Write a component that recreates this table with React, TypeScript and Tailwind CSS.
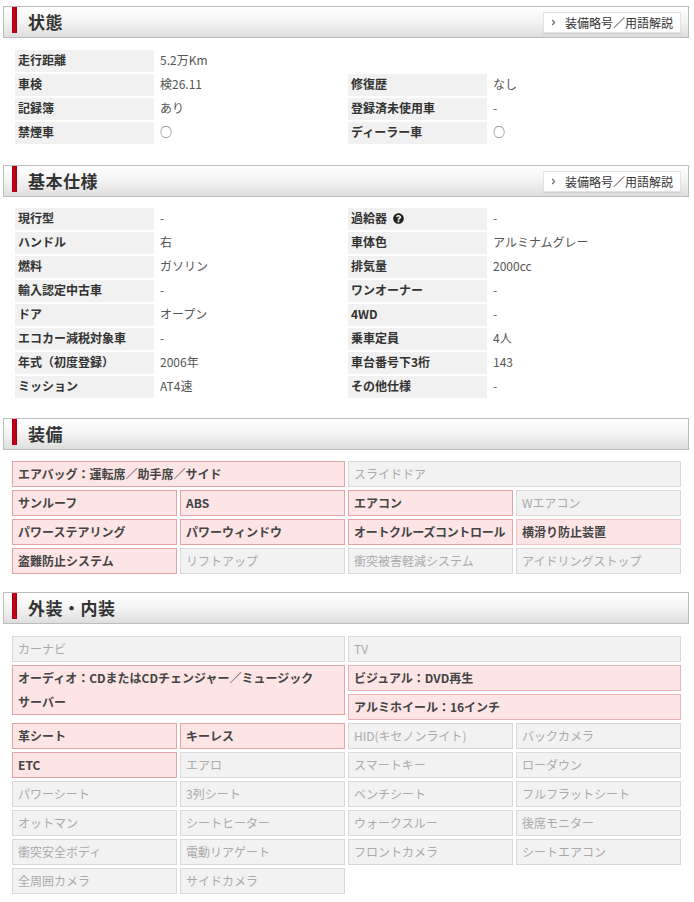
import React from "react";
import { FaQuestionCircle } from "react-icons/fa";

const FONT = {
  fontFamily:
    '"Noto Sans CJK JP", "Noto Sans", "Liberation Sans", sans-serif',
};

function Header({ title, button }: { title: string; button?: boolean }) {
  return (
    <div className="ml-[3px] w-[686px] h-[32px] border border-[#bdbdbd] bg-gradient-to-b from-[#ffffff] via-[#f3f3f3] to-[#dedede] flex items-start">
      <div className="ml-[8px] w-[5px] h-[26px] bg-gradient-to-r from-[#9c0010] via-[#d0001a] to-[#9c0010]" />
      <div className="ml-[11px] h-[30px] flex items-center text-[17px] font-bold text-[#333] tracking-[0.5px]">
        {title}
      </div>
      {button && (
        <div className="ml-auto mr-[7px] mt-[5px] h-[21px] w-[138px] bg-white border border-[#e2e2e2] shadow-[0_1px_1px_rgba(0,0,0,0.08)] flex items-center">
          <svg width="5" height="7" viewBox="0 0 5 7" className="ml-[7px]">
            <path d="M1.2 1 L3.6 3.5 L1.2 6" fill="none" stroke="#666" strokeWidth="1.1" />
          </svg>
          <span className="ml-[9px] text-[12px] text-[#333]">装備略号／用語解説</span>
        </div>
      )}
    </div>
  );
}

type Pair = { label?: React.ReactNode; value?: string };

function Half({ p, right }: { p: Pair; right?: boolean }) {
  if (!p.label) return <div className={right ? "flex-1" : "w-[333px]"} />;
  return (
    <div className={`flex h-[22px] ${right ? "flex-1" : "w-[333px]"}`}>
      <div className="w-[139px] bg-[#f1f1f1] pl-[3px] pb-[2px] flex items-center text-[12px] font-bold text-[#333]">
        {p.label}
      </div>
      <div className="flex-1 flex items-center pb-[2px] pl-[6px] text-[12px] text-[#555]">
        {p.value}
      </div>
    </div>
  );
}

function SpecTable({ rows }: { rows: [Pair, Pair][] }) {
  return (
    <div className="ml-[15px] w-[666px] flex flex-col gap-[2px]">
      {rows.map((r, i) => (
        <div key={i} className="flex">
          <Half p={r[0]} />
          <Half p={r[1]} right />
        </div>
      ))}
    </div>
  );
}

type Item = { t: React.ReactNode; on: boolean; span?: 2; cls?: string };

function Cell({ it }: { it: Item }) {
  const base = "h-[26px] border px-[5px] text-[12px] leading-[24px] whitespace-nowrap overflow-hidden";
  const color = it.on
    ? "bg-[#fde5e6] border-[#e4a4a7] text-[#444] font-bold"
    : "bg-[#f2f2f2] border-[#d9d9d9] text-[#aaa]";
  return <div className={`${base} ${color} ${it.span === 2 ? "col-span-2" : ""} ${it.cls ?? ""}`}>{it.t}</div>;
}

function Grid({ items }: { items: Item[] }) {
  return (
    <div className="ml-[12px] w-[669px] grid grid-cols-4 gap-[3px]">
      {items.map((it, i) => (
        <Cell key={i} it={it} />
      ))}
    </div>
  );
}

export default function App() {
  const status: [Pair, Pair][] = [
    [{ label: "走行距離", value: "5.2万Km" }, {}],
    [{ label: "車検", value: "検26.11" }, { label: "修復歴", value: "なし" }],
    [{ label: "記録簿", value: "あり" }, { label: "登録済未使用車", value: "-" }],
    [{ label: "禁煙車", value: "○" }, { label: "ディーラー車", value: "○" }],
  ];
  const spec: [Pair, Pair][] = [
    [
      { label: "現行型", value: "-" },
      {
        label: (
          <span className="flex items-center">
            過給器
            <FaQuestionCircle className="ml-[6px] text-[#222]" size={11} />
          </span>
        ),
        value: "-",
      },
    ],
    [{ label: "ハンドル", value: "右" }, { label: "車体色", value: "アルミナムグレー" }],
    [{ label: "燃料", value: "ガソリン" }, { label: "排気量", value: "2000cc" }],
    [{ label: "輸入認定中古車", value: "-" }, { label: "ワンオーナー", value: "-" }],
    [{ label: "ドア", value: "オープン" }, { label: "4WD", value: "-" }],
    [{ label: "エコカー減税対象車", value: "-" }, { label: "乗車定員", value: "4人" }],
    [{ label: "年式（初度登録）", value: "2006年" }, { label: "車台番号下3桁", value: "143" }],
    [{ label: "ミッション", value: "AT4速" }, { label: "その他仕様", value: "-" }],
  ];
  const equip: Item[] = [
    { t: "エアバッグ：運転席／助手席／サイド", on: true, span: 2 },
    { t: "スライドドア", on: false, span: 2 },
    { t: "サンルーフ", on: true },
    { t: "ABS", on: true },
    { t: "エアコン", on: true },
    { t: "Wエアコン", on: false },
    { t: "パワーステアリング", on: true },
    { t: "パワーウィンドウ", on: true },
    { t: "オートクルーズコントロール", on: true, cls: "tracking-[-0.3px]" },
    { t: "横滑り防止装置", on: true, cls: "!border-[#f0c4c4]" },
    { t: "盗難防止システム", on: true },
    { t: "リフトアップ", on: false },
    { t: "衝突被害軽減システム", on: false },
    { t: "アイドリングストップ", on: false },
  ];
  const ext1: Item[] = [
    { t: "カーナビ", on: false, span: 2 },
    { t: "TV", on: false, span: 2 },
  ];
  const ext2: Item[] = [
    { t: "革シート", on: true },
    { t: "キーレス", on: true },
    { t: "HID(キセノンライト)", on: false },
    { t: "バックカメラ", on: false },
    { t: "ETC", on: true },
    { t: "エアロ", on: false },
    { t: "スマートキー", on: false },
    { t: "ローダウン", on: false },
    { t: "パワーシート", on: false },
    { t: "3列シート", on: false },
    { t: "ベンチシート", on: false },
    { t: "フルフラットシート", on: false },
    { t: "オットマン", on: false },
    { t: "シートヒーター", on: false },
    { t: "ウォークスルー", on: false },
    { t: "後席モニター", on: false },
    { t: "衝突安全ボディ", on: false },
    { t: "電動リアゲート", on: false },
    { t: "フロントカメラ", on: false },
    { t: "シートエアコン", on: false },
    { t: "全周囲カメラ", on: false },
    { t: "サイドカメラ", on: false },
  ];

  return (
    <div className="w-[694px] min-h-[902px] bg-white pt-[6px]" style={FONT}>
      <Header title="状態" button />
      <div className="mt-[12px]">
        <SpecTable rows={status} />
      </div>

      <div className="mt-[21px]">
        <Header title="基本仕様" button />
      </div>
      <div className="mt-[11px]">
        <SpecTable rows={spec} />
      </div>

      <div className="mt-[20px]">
        <Header title="装備" />
      </div>
      <div className="mt-[11px]">
        <Grid items={equip} />
      </div>

      <div className="mt-[18px]">
        <Header title="外装・内装" />
      </div>
      <div className="mt-[12px] flex flex-col gap-[3px]">
        <Grid items={ext1} />
        <div className="ml-[12px] w-[669px] grid grid-cols-4 gap-[3px]">
          <div className="col-span-2 row-span-2 self-start border bg-[#fde5e6] border-[#e4a4a7] text-[#444] font-bold px-[5px] text-[12px] leading-[24px]">
            オーディオ：CDまたはCDチェンジャー／ミュージック
            <br />
            サーバー
          </div>
          <Cell it={{ t: "ビジュアル：DVD再生", on: true, span: 2, cls: "!border-[#eab4b6]" }} />
          <Cell it={{ t: "アルミホイール：16インチ", on: true, span: 2, cls: "!border-[#eab4b6]" }} />
        </div>
        <Grid items={ext2} />
      </div>
    </div>
  );
}
